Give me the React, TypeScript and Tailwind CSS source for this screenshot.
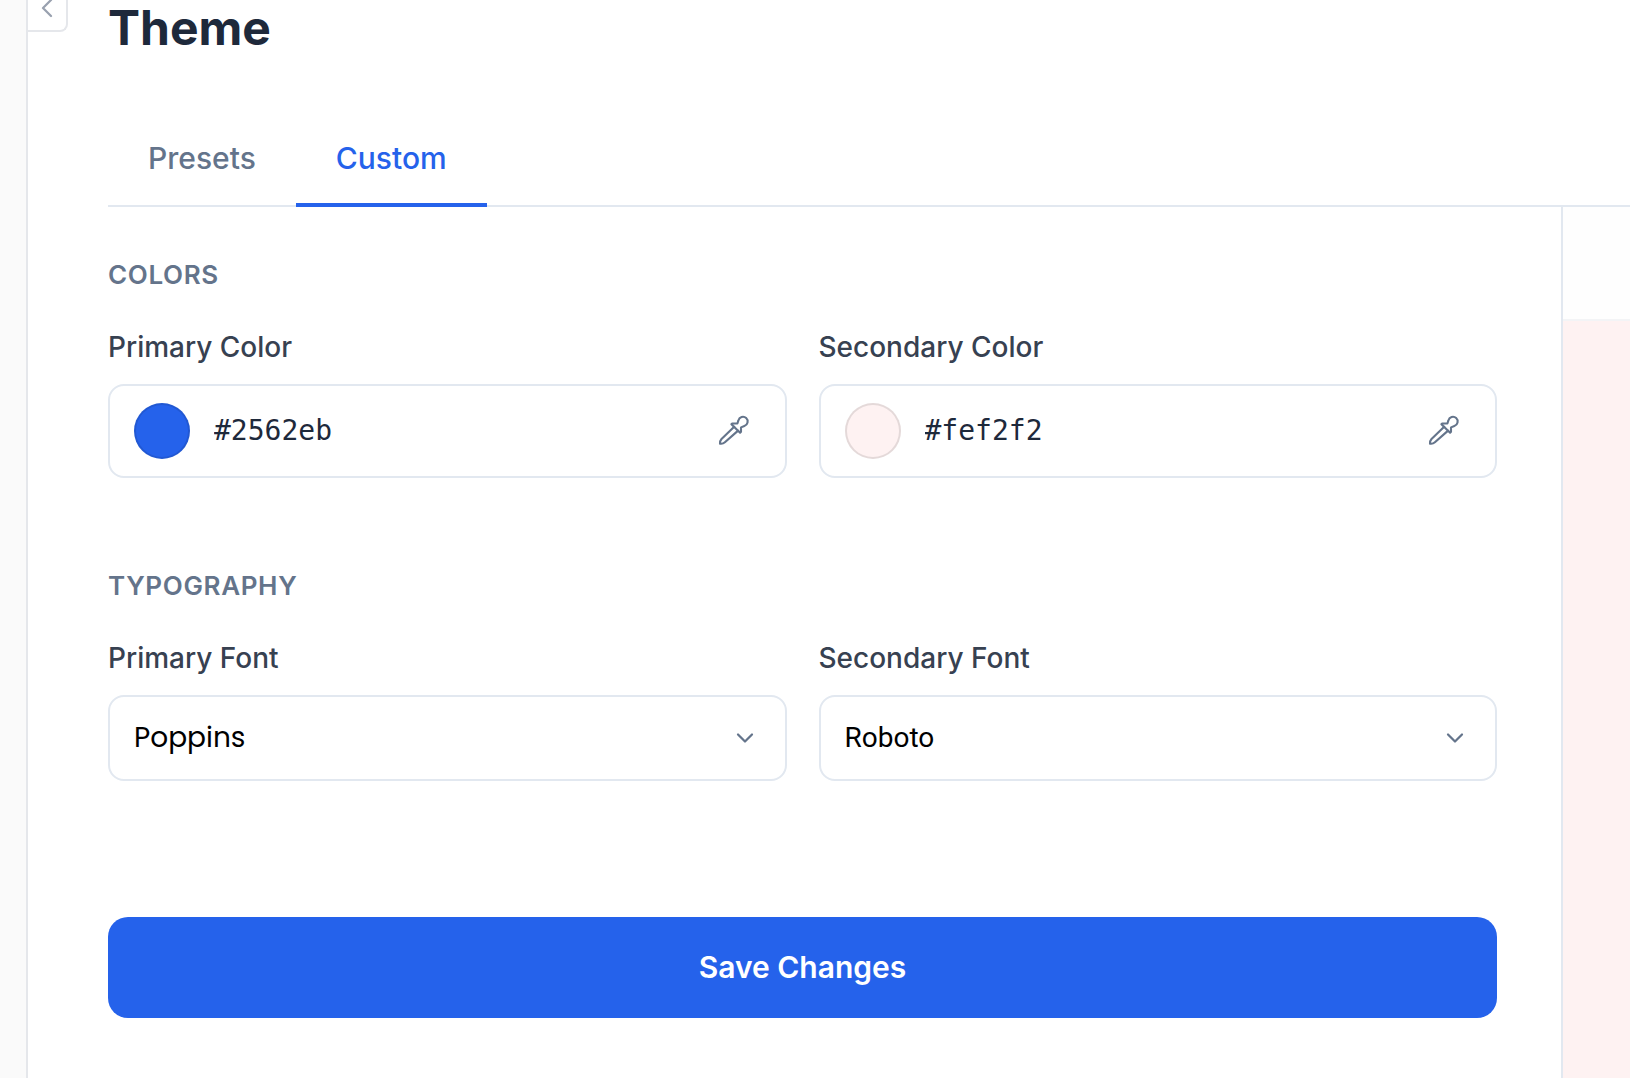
import React, { useState } from 'react';

interface FieldProps {
  id: string;
  label: string;
  value: string;
  onChange: (value: string) => void;
}

interface FontFieldProps extends FieldProps {
  fontClass: string;
}

const FONTS = ['Poppins', 'Roboto', 'Inter', 'Lato', 'Open Sans'];

const EyedropperIcon = () => (
  <svg className="size-8" viewBox="0 0 32 32" fill="none" stroke="currentColor" strokeWidth="2.1" strokeLinecap="round" strokeLinejoin="round" aria-hidden="true">
    <path d="M16.200 11.800 3.500 24c-1.200 1.300-1.700 2.600-1.500 4.700 2.100.3 3.600-.2 4.900-1.400L20.100 15.600" />
    <path d="m13.400 9.200 8.700 8.500.9-.9v-4.400l3.400-1.400a4.700 4.700 0 1 0-6-5.600l-1 3.100h-4.900z" />
  </svg>
);

const ColorField: React.FC<FieldProps> = ({ id, label, value, onChange }) => (
  <div className="min-w-0">
    <label htmlFor={id} className="mb-[17px] block text-[28px] leading-10 font-medium text-[#374151]">{label}</label>
    <div className="flex items-center gap-6 rounded-2xl border-2 border-[#e2e8f0] bg-white py-[17px] pr-[35px] pl-6">
      <span className="size-14 shrink-0 rounded-full border-2 border-black/10" style={{ backgroundColor: value }} />
      <input
        id={id}
        type="text"
        value={value}
        onChange={(e) => onChange(e.target.value)}
        className="min-w-0 flex-1 bg-transparent font-['DejaVu_Sans_Mono',monospace] text-[28px] leading-10 text-[#1e293b] outline-none"
      />
      <button type="button" aria-label={`Pick ${label}`} className="shrink-0 text-[#64748b]">
        <EyedropperIcon />
      </button>
    </div>
  </div>
);

const FontField: React.FC<FontFieldProps> = ({ id, label, value, onChange, fontClass }) => (
  <div className="min-w-0">
    <label htmlFor={id} className="mb-[17px] block text-[28px] leading-10 font-medium text-[#374151]">{label}</label>
    <div className="relative">
      <select
        id={id}
        value={value}
        onChange={(e) => onChange(e.target.value)}
        className={`block w-full appearance-none rounded-2xl border-2 border-[#e2e8f0] bg-white py-[21px] pr-20 pl-6 text-[28px] leading-10 text-black outline-none ${fontClass}`}
      >
        {FONTS.map((font) => (
          <option key={font} value={font}>{font}</option>
        ))}
      </select>
      <svg className="pointer-events-none absolute inset-y-0 right-[30px] my-auto size-6 text-[#64748b]" viewBox="0 0 24 24" fill="none" stroke="currentColor" strokeWidth="2.25" strokeLinecap="round" strokeLinejoin="round" aria-hidden="true">
        <path d="m5 8.500 7 7 7-7" />
      </svg>
    </div>
  </div>
);

const App: React.FC = () => {
  const [primaryColor, setPrimaryColor] = useState('#2562eb');
  const [secondaryColor, setSecondaryColor] = useState('#fef2f2');
  const [primaryFont, setPrimaryFont] = useState('Poppins');
  const [secondaryFont, setSecondaryFont] = useState('Roboto');

  return (
    <div className="flex min-h-screen bg-white font-[Inter,sans-serif] antialiased [font-optical-sizing:none]">
      <aside className="w-7 shrink-0 border-r-2 border-gray-200 bg-neutral-50" />

      {/* Sidebar toggle, tucked under the top edge */}
      <div className="w-20 shrink-0">
        <button type="button" aria-label="Collapse sidebar" className="flex h-8 w-10 items-end justify-center rounded-br-lg border-r-2 border-b-2 border-gray-200 bg-white pb-3 text-gray-400">
          <svg className="h-5 w-3 shrink-0" viewBox="0 0 12 20" fill="none" stroke="currentColor" strokeWidth="2.25" strokeLinecap="round" strokeLinejoin="round" aria-hidden="true">
            <path d="m10 2-8 8 8 8" />
          </svg>
        </button>
      </div>

      <main className="flex min-w-0 flex-1 flex-col">
        <h1 className="text-5xl leading-14 font-bold text-[#1e293b]">Theme</h1>

        <nav className="mt-14 flex border-b-2 border-[#e2e8f0]">
          <button type="button" className="-mb-0.5 border-b-4 border-transparent px-10 pt-6 pb-[23px] text-[30px] leading-11 font-medium text-[#64748b]">Presets</button>
          <button type="button" className="-mb-0.5 border-b-4 border-[#2562eb] px-10 pt-6 pb-[23px] text-[30px] leading-11 font-medium text-[#2562eb]">Custom</button>
        </nav>

        <div className="flex flex-1">
          <form className="min-w-0 flex-1 pt-12 pr-16" onSubmit={(e) => e.preventDefault()}>
            <section>
              <h2 className="text-[26px] leading-10 font-semibold tracking-wide text-[#64748b] uppercase">Colors</h2>
              <div className="mt-8 grid grid-cols-2 gap-8">
                <ColorField id="primary-color" label="Primary Color" value={primaryColor} onChange={setPrimaryColor} />
                <ColorField id="secondary-color" label="Secondary Color" value={secondaryColor} onChange={setSecondaryColor} />
              </div>
            </section>

            <section className="mt-22">
              <h2 className="text-[26px] leading-10 font-semibold tracking-wide text-[#64748b] uppercase">Typography</h2>
              <div className="mt-8 grid grid-cols-2 gap-8">
                <FontField id="primary-font" label="Primary Font" value={primaryFont} onChange={setPrimaryFont} fontClass="font-[Poppins,Lato,sans-serif]" />
                <FontField id="secondary-font" label="Secondary Font" value={secondaryFont} onChange={setSecondaryFont} fontClass="font-[Roboto,sans-serif]" />
              </div>
            </section>

            <button type="submit" className="mt-34 w-full rounded-[20px] bg-[#2562eb] py-7 text-[30px] leading-[45px] font-semibold text-white">Save Changes</button>
          </form>

          <aside className="flex w-[69px] shrink-0 flex-col border-l-2 border-[#e2e8f0]">
            <div className="h-[114px] border-b-2 border-gray-100 bg-[#fefefe]" />
            <div className="flex-1 bg-[#fef2f2]" />
          </aside>
        </div>
      </main>
    </div>
  );
};

export default App;
